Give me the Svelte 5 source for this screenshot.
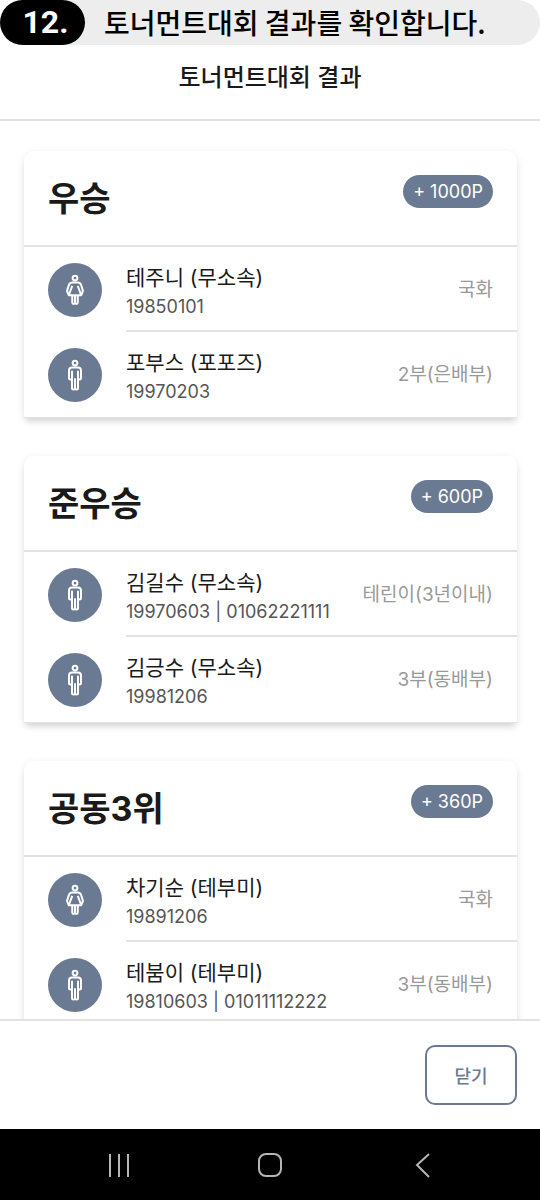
<script lang="ts">
	type Player = {
		name: string;
		club: string;
		info: string;
		division: string;
		female?: boolean;
	};

	type Result = { rank: string; points: number; players: Player[] };

	let { onclose = () => {} }: { onclose?: () => void } = $props();

	const results: Result[] = [
		{
			rank: '우승',
			points: 1000,
			players: [
				{ name: '테주니', club: '무소속', info: '19850101', division: '국화', female: true },
				{ name: '포부스', club: '포포즈', info: '19970203', division: '2부(은배부)' }
			]
		},
		{
			rank: '준우승',
			points: 600,
			players: [
				{
					name: '김길수',
					club: '무소속',
					info: '19970603 | 01062221111',
					division: '테린이(3년이내)'
				},
				{ name: '김긍수', club: '무소속', info: '19981206', division: '3부(동배부)' }
			]
		},
		{
			rank: '공동3위',
			points: 360,
			players: [
				{ name: '차기순', club: '테부미', info: '19891206', division: '국화', female: true },
				{
					name: '테붐이',
					club: '테부미',
					info: '19810603 | 01011112222',
					division: '3부(동배부)'
				}
			]
		}
	];
</script>

<div class="screen">
	<div class="caption">
		<span class="step">12.</span>
		<p>토너먼트대회 결과를 확인합니다.</p>
	</div>

	<header>
		<h1>토너먼트대회 결과</h1>
	</header>

	<main>
		{#each results as result (result.rank)}
			<section class="card">
				<div class="card-head">
					<h2>{result.rank}</h2>
					<span class="points">+ {result.points}P</span>
				</div>
				<ul>
					{#each result.players as player (player.name)}
						<li>
							<span class="avatar">
								<svg viewBox="0 0 512 512" aria-hidden="true">
									<circle cx="256" cy="64" r="38" />
									{#if player.female}
										<path
											d="M212 190l-56 150h200l-56-150M212 340v116a22 22 0 0 0 44 0V340v116a22 22 0 0 0 44 0V340M156 340l-20-50c-8-8-8-16-6-24l26-84c9-30 24-46 54-46h92c30 0 45 16 54 46l26 84c2 8 2 16-6 24l-20 50"
										/>
									{:else}
										<path
											d="M304 136h-96a48 48 0 0 0-48 48v120a24 24 0 0 0 48 0V200v264a24 24 0 0 0 48 0V320v144a24 24 0 0 0 48 0V200v104a24 24 0 0 0 48 0V184a48 48 0 0 0-48-48z"
										/>
									{/if}
								</svg>
							</span>
							<div class="row">
								<div class="who">
									<h3>{player.name} ({player.club})</h3>
									<p>{player.info}</p>
								</div>
								<span class="division">{player.division}</span>
							</div>
						</li>
					{/each}
				</ul>
			</section>
		{/each}
	</main>

	<footer>
		<button class="close" type="button" onclick={onclose}>닫기</button>
	</footer>

	<nav>
		<button type="button" aria-label="최근 앱">
			<svg viewBox="0 0 28 28"><path d="M6 3v23M15 3v23M24 3v23" /></svg>
		</button>
		<button type="button" aria-label="홈">
			<svg viewBox="0 0 28 28"><rect x="3" y="3" width="22" height="22" rx="7" /></svg>
		</button>
		<button type="button" aria-label="뒤로">
			<svg viewBox="0 0 28 28"><path d="M21 3L9 14l12 12" /></svg>
		</button>
	</nav>
</div>

<style>
	:global(body) {
		background: #fff;
		margin: 0;
	}

	.screen {
		--line: #e2e2e2;
		--slate: #6b7a93;
		color: #1a1a1a;
		display: flex;
		flex-direction: column;
		font-family: Inter, 'Noto Sans CJK KR', sans-serif;
		height: 100vh;
	}

	h1,
	h2,
	h3,
	p,
	ul {
		margin: 0;
		padding: 0;
	}

	.caption {
		align-items: center;
		background: #ededed;
		border-radius: 23px;
		color: #000;
		display: flex;
		flex: none;
		gap: 19px;
		height: 45px;
	}

	.caption p {
		font-family: 'Noto Sans CJK KR', sans-serif;
		font-size: 28px;
		font-weight: 500;
		line-height: 45px;
	}

	.step {
		background: #000;
		border-radius: 23px;
		box-sizing: border-box;
		color: #fff;
		font-family: Roboto, sans-serif;
		font-size: 32px;
		font-weight: 700;
		line-height: 45px;
		padding-left: 6px;
		text-align: center;
		width: 85px;
	}

	header {
		border-bottom: 2px solid var(--line);
		flex: none;
		padding: 15px 24px 23px;
		text-align: center;
	}

	h1 {
		font-size: 24px;
		font-weight: 500;
		line-height: 36px;
	}

	main {
		display: flex;
		flex: 1;
		flex-direction: column;
		gap: 38px;
		min-height: 0;
		overflow-y: auto;
		padding: 30px 23px 30px 24px;
		scrollbar-width: none;
	}

	.card {
		border-bottom: 1px solid var(--line);
		border-radius: 10px 10px 0 0;
		box-shadow:
			0 5px 6px -2px rgba(0, 0, 0, 0.13),
			0 2px 10px rgba(0, 0, 0, 0.08);
		flex: none;
	}

	.card-head {
		align-items: flex-start;
		border-bottom: 2px solid var(--line);
		display: flex;
		justify-content: space-between;
		padding: 24px 24px 22px;
	}

	h2 {
		font-size: 34px;
		font-weight: 700;
		line-height: 48px;
	}

	.points {
		background: var(--slate);
		border-radius: 17px;
		color: #fff;
		font-size: 18px;
		line-height: 33px;
		padding: 0 10px;
	}

	ul {
		list-style: none;
	}

	li {
		align-items: center;
		display: flex;
		gap: 24px;
		padding-left: 24px;
	}

	.avatar {
		align-items: center;
		background: var(--slate);
		border-radius: 50%;
		display: flex;
		flex: none;
		height: 54px;
		justify-content: center;
		width: 54px;
	}

	.avatar svg {
		fill: none;
		height: 32px;
		stroke: #fff;
		stroke-linejoin: round;
		stroke-width: 32;
		width: 32px;
	}

	.row {
		align-items: center;
		border-bottom: 2px solid var(--line);
		box-sizing: border-box;
		display: flex;
		flex: 1;
		height: 85px;
		justify-content: space-between;
		padding: 3px 24px 0 0;
	}

	li:last-child .row {
		border-bottom-color: transparent;
	}

	.who {
		padding-top: 3px;
	}

	h3 {
		font-size: 21px;
		font-weight: 400;
		line-height: 30px;
	}

	.who p {
		color: #555;
		font-size: 18px;
		line-height: 28px;
	}

	.division {
		color: #999;
		font-size: 19px;
		line-height: 28px;
	}

	footer {
		border-top: 2px solid var(--line);
		display: flex;
		flex: none;
		justify-content: flex-end;
		padding: 24px 23px;
	}

	.close {
		background: #fff;
		border: 2px solid var(--slate);
		border-radius: 10px;
		color: var(--slate);
		cursor: pointer;
		font-family: inherit;
		font-size: 18px;
		font-weight: 500;
		height: 60px;
		padding: 0;
		width: 92px;
	}

	nav {
		align-items: center;
		background: #000;
		display: flex;
		flex: none;
		height: 71px;
		justify-content: space-around;
		padding: 0 42px;
	}

	nav button {
		background: none;
		border: 0;
		cursor: pointer;
		display: flex;
		padding: 8px;
	}

	nav svg {
		fill: none;
		height: 28px;
		stroke: #b5b5b5;
		stroke-width: 2;
		width: 28px;
	}
</style>
